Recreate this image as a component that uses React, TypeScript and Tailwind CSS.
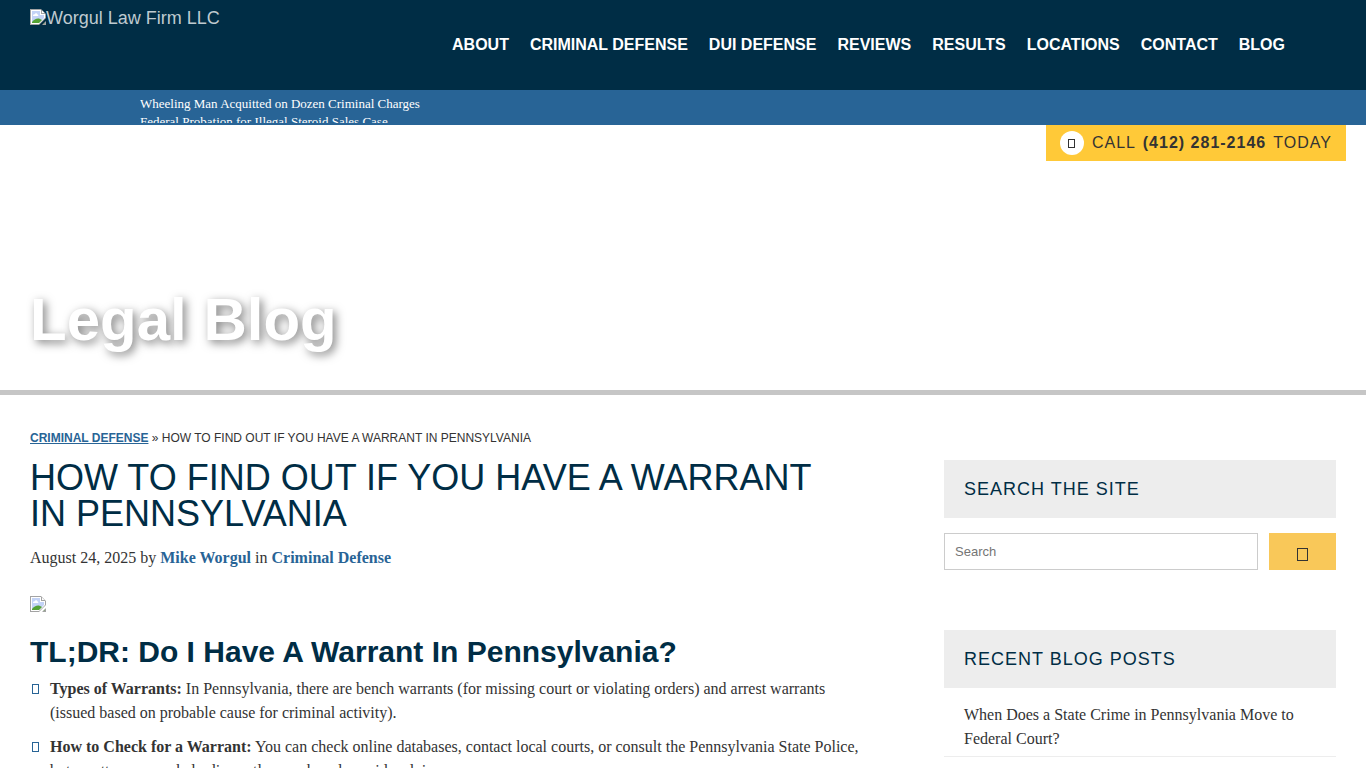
import type { ReactNode } from "react";

const navItems = [
  "About",
  "Criminal Defense",
  "DUI Defense",
  "Reviews",
  "Results",
  "Locations",
  "Contact",
  "Blog",
];

const newsItems = [
  "Wheeling Man Acquitted on Dozen Criminal Charges",
  "Federal Probation for Illegal Steroid Sales Case",
];

const sans = "font-['Liberation_Sans',Arial,sans-serif]";
const serif = "font-['Liberation_Serif','Times_New_Roman',serif]";

const MissingImage = ({ className = "" }: { className?: string }) => (
  <svg
    width="16"
    height="16"
    viewBox="0 0 16 16"
    aria-hidden="true"
    className={className}
  >
    <path d="M0 0H11L16 5V9L9 16H0Z" fill="#a3a3a3" />
    <path d="M1 1H11V5H15V9L9 15H1Z" fill="#fff" />
    <path d="M2 2H10V6H14V9L9 14H2Z" fill="#c3d3f6" />
    <path
      d="M3 7C2.800 5.800 4 5.200 4.600 5.400C5 4 7.200 4 7.500 5.600C8.500 5.600 8.600 7 8 7Z"
      fill="#fff"
    />
    <path d="M2 14V13C4 10.500 6.500 9 9 9.500L12 11L9 14Z" fill="#54a234" />
    <path d="M12 1.500V4H14.500Z" fill="#fff" />
    <path d="M16 12V16H12Z" fill="#a3a3a3" />
    <path d="M14.500 13.500V14.500H13.500Z" fill="#54a234" />
  </svg>
);

const GlyphBox = ({ className = "" }: { className?: string }) => (
  <span
    aria-hidden="true"
    className={`block shrink-0 border border-current ${className}`}
  />
);

const SidebarTitle = ({ children }: { children: ReactNode }) => (
  <h3
    className={`${sans} bg-[#ededed] p-5 text-lg leading-[18px] tracking-[1px] text-[#002d45] uppercase`}
  >
    {children}
  </h3>
);

const ListItem = ({ title, children }: { title: string; children: ReactNode }) => (
  <li className="flex gap-[11px]">
    <GlyphBox className="mt-[7px] ml-[2px] h-[10px] w-[7px] text-[#286496]" />
    <p>
      <strong>{title}</strong> {children}
    </p>
  </li>
);

const Header = () => (
  <header>
    <div className="flex h-[90px] justify-between bg-[#002d45] pl-[30px]">
      <a
        href="#"
        className={`${sans} mt-[9px] flex h-[18px] text-lg leading-[18px] text-[#bfcad0]`}
      >
        <MissingImage />
        Worgul Law Firm LLC
      </a>

      <nav className="flex items-center pr-[81px]">
        <ul className="flex gap-[21px]">
          {navItems.map((item) => (
            <li key={item}>
              <a
                href="#"
                className={`${sans} text-base font-bold text-white uppercase`}
              >
                {item}
              </a>
            </li>
          ))}
        </ul>
      </nav>
    </div>

    <div className="h-[35px] bg-[#286496] pt-[5px] pl-[140px]">
      <ul className="h-[28px] overflow-hidden text-[13px] leading-[18px] text-white">
        {newsItems.map((item) => (
          <li key={item}>
            <a href="#">{item}</a>
          </li>
        ))}
      </ul>
    </div>
  </header>
);

const Hero = () => (
  <section
    className={`${sans} flex h-[270px] flex-col justify-between border-b-[5px] border-[#c6c6c6]`}
  >
    <a
      href="tel:4122812146"
      className="mr-5 flex h-9 items-center self-end bg-[#ffc938] px-[14px] text-base tracking-[1px] text-[#333]"
    >
      <span className="mr-2 flex size-6 items-center justify-center rounded-full bg-white">
        <GlyphBox className="h-[9px] w-[7px]" />
      </span>
      <span>
        CALL <strong className="mx-[2px]">(412) 281-2146</strong> TODAY
      </span>
    </a>

    <h2 className="mb-[35px] pl-[30px] text-[60px] leading-[70px] font-bold text-white [text-shadow:3px_3px_10px_rgba(0,0,0,0.5)]">
      Legal Blog
    </h2>
  </section>
);

const Article = () => (
  <article className="min-w-0 flex-1">
    <h1 className={`${sans} pr-5 text-4xl leading-9 text-[#002d45] uppercase`}>
      How to Find Out if You Have a Warrant in Pennsylvania
    </h1>

    <p className="mt-[14px]">
      August 24, 2025 by{" "}
      <a href="#" className="font-bold text-[#286496]">
        Mike Worgul
      </a>{" "}
      in{" "}
      <a href="#" className="font-bold text-[#286496]">
        Criminal Defense
      </a>
    </p>

    <MissingImage className="mt-[26px]" />

    <h2
      className={`${sans} mt-[22px] text-[30px] leading-9 font-bold text-[#002d45]`}
    >
      TL;DR: Do I Have A Warrant In Pennsylvania?
    </h2>

    <ul className="mt-[7px] space-y-[10px]">
      <ListItem title="Types of Warrants:">
        In Pennsylvania, there are bench warrants (for missing court or
        violating orders) and arrest warrants (issued based on probable cause
        for criminal activity).
      </ListItem>
      <ListItem title="How to Check for a Warrant:">
        You can check online databases, contact local courts, or consult the
        Pennsylvania State Police, but an attorney can help discreetly search
        and provide advice.
      </ListItem>
    </ul>
  </article>
);

const Sidebar = () => (
  <aside className="w-[392px] shrink-0">
    <SidebarTitle>Search the Site</SidebarTitle>
    <form
      className="mt-[15px] flex gap-[11px]"
      onSubmit={(event) => event.preventDefault()}
    >
      <input
        type="search"
        aria-label="Search"
        placeholder="Search"
        className={`${sans} h-[37px] min-w-0 flex-1 border border-[#ccc] px-[10px] text-[13px] placeholder:text-[#757575]`}
      />
      <button
        type="submit"
        aria-label="Submit search"
        className="flex w-[67px] justify-center bg-[#f9c859] pt-[15px] text-[#333]"
      >
        <GlyphBox className="h-[13px] w-[11px]" />
      </button>
    </form>

    <div className="mt-[60px]">
      <SidebarTitle>Recent Blog Posts</SidebarTitle>
      <ul>
        <li className="border-b border-[#ededed] px-5 pt-[15px] pb-[5px]">
          <a href="#">
            When Does a State Crime in Pennsylvania Move to Federal Court?
          </a>
        </li>
      </ul>
    </div>
  </aside>
);

const App = () => {
  return (
    <div className={`${serif} bg-white text-base leading-6 text-[#333]`}>
      <Header />
      <Hero />

      <main className="px-[30px] pt-[34px]">
        <p className={`${sans} text-xs leading-[18px] uppercase`}>
          <a href="#" className="font-bold text-[#286496] underline">
            Criminal Defense
          </a>{" "}
          » How to Find Out if You Have a Warrant in Pennsylvania
        </p>

        <div className="mt-[13px] flex gap-[80px]">
          <Article />
          <Sidebar />
        </div>
      </main>
    </div>
  );
};

export default App;
